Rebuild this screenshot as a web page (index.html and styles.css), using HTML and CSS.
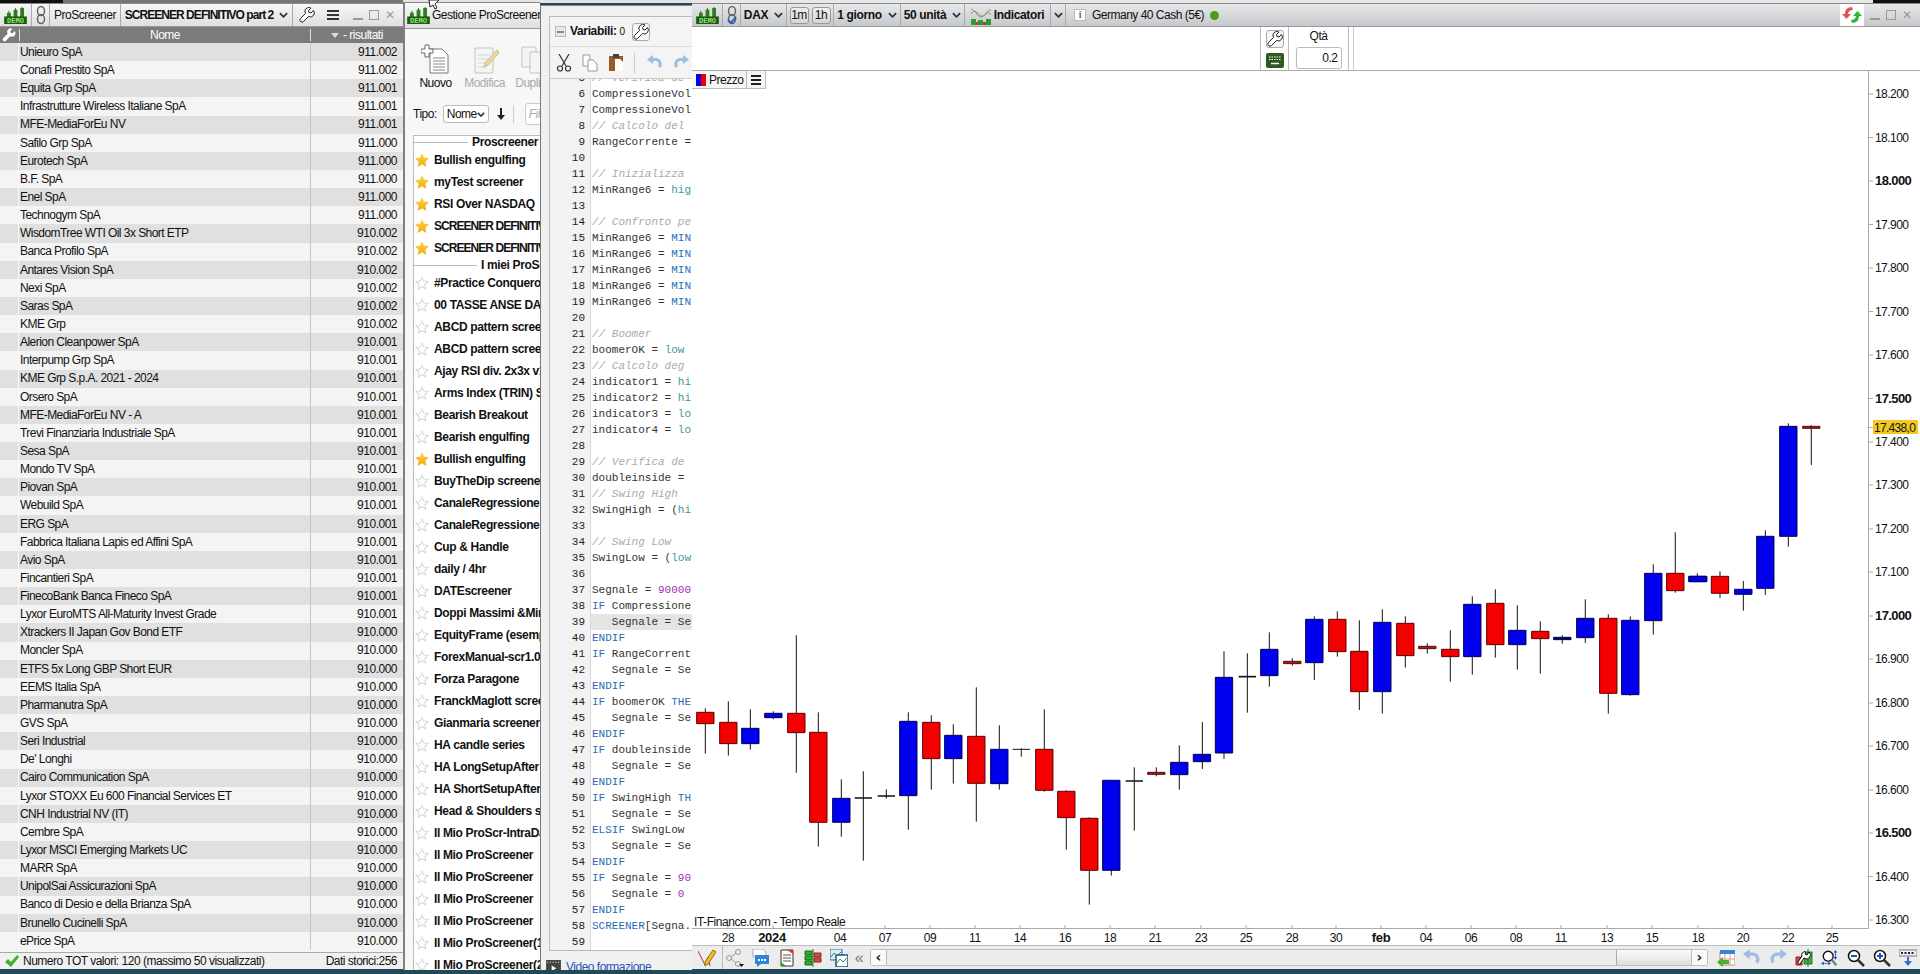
FILE: index.html
```html
<!DOCTYPE html>
<html lang="it">
<head>
<meta charset="utf-8">
<title>ProScreener</title>
<link rel="stylesheet" href="styles.css">
</head>
<body>
<svg class="defs" width="0" height="0" aria-hidden="true">
  <defs>
    <symbol id="demo" viewBox="0 0 24 18">
      <path fill="#2f7d1c" d="M3 6h4v5H3zM10 3h4v8h-4zM17 1h4v10h-4z"/>
      <path stroke="#2f7d1c" d="M5 4v8M12 1v11M19 0v12"/>
      <rect y="10" width="24" height="8" fill="#1c5a14"/>
      <text x="12" y="17" class="demo-txt" text-anchor="middle">DEMO</text>
    </symbol>
    <symbol id="wrench" viewBox="0 0 16 16">
      <path fill="#fff" stroke="#222" d="M14.5 3.5 12 6 10 5.500 9.500 3.500 12 1A4 4 0 0 0 6.500 6.500L1.500 11.500A2 2 0 0 0 4.500 14.500L9.500 9.500A4 4 0 0 0 14.500 3.500z"/>
    </symbol>
    <symbol id="chev" viewBox="0 0 10 6">
      <path fill="none" stroke="#333" stroke-width="2" d="M1 1l4 4 4-4"/>
    </symbol>
    <symbol id="undo" viewBox="0 0 16 16">
      <path fill="none" stroke="#9dbce6" stroke-width="3" d="M5 4.500h4a4.500 4.500 0 0 1 3 7.500"/>
      <path fill="#9dbce6" d="M6 0v9L0 4.500z"/>
    </symbol>
    <symbol id="redo" viewBox="0 0 16 16">
      <path fill="none" stroke="#9dbce6" stroke-width="3" d="M11 4.500H7a4.500 4.500 0 0 0-3 7.500"/>
      <path fill="#9dbce6" d="M10 0v9l6-4.500z"/>
    </symbol>
    <symbol id="link" viewBox="0 0 12 20">
      <g fill="none" stroke="#666" stroke-width="1.500">
        <ellipse cx="6" cy="6" rx="3.500" ry="4.500"/>
        <ellipse cx="6" cy="14" rx="3.500" ry="4.500"/>
      </g>
    </symbol>
  </defs>
</svg>

<div class="strip strip-a"></div>
<div class="strip strip-b"></div>
<div class="strip strip-c"></div>

<!-- Lista risultati -->
<section class="win win-results">
  <header class="tbar tbar-light">
    <div class="cell c-logo"><svg class="logo"><use href="#demo"/></svg></div>
    <div class="cell c-link"><svg class="link-ic"><use href="#link"/></svg></div>
    <div class="cell c-name">ProScreener</div>
    <div class="cell c-screener"><b class="caps">SCREENER DEFINITIVO part 2</b><svg class="chev"><use href="#chev"/></svg></div>
    <div class="tools">
      <svg class="ic16"><use href="#wrench"/></svg>
      <div class="burger"></div>
      <div class="winbtns"><i class="wmin"></i><i class="wmax"></i><i class="wclose">✕</i></div>
    </div>
  </header>
  <div class="res-head">
    <svg class="res-wrench" viewBox="0 0 16 16"><path fill="#fff" d="M14.500 3.500 12 6 10 5.500 9.500 3.500 12 1A4 4 0 0 0 6.500 6.500L1.500 11.500A2 2 0 0 0 4.500 14.500L9.500 9.500A4 4 0 0 0 14.500 3.500z"/></svg>
    <span class="res-nome">Nome</span>
    <span class="res-val"><i class="sort"></i> - risultati</span>
  </div>
  <div class="res-rows">
    <div class="row"><span class="nm">Unieuro SpA</span><span class="val">911.002</span></div>
    <div class="row"><span class="nm">Conafi Prestito SpA</span><span class="val">911.002</span></div>
    <div class="row"><span class="nm">Equita Grp SpA</span><span class="val">911.001</span></div>
    <div class="row"><span class="nm">Infrastrutture Wireless Italiane SpA</span><span class="val">911.001</span></div>
    <div class="row"><span class="nm">MFE-MediaForEu NV</span><span class="val">911.001</span></div>
    <div class="row"><span class="nm">Safilo Grp SpA</span><span class="val">911.000</span></div>
    <div class="row"><span class="nm">Eurotech SpA</span><span class="val">911.000</span></div>
    <div class="row"><span class="nm">B.F. SpA</span><span class="val">911.000</span></div>
    <div class="row"><span class="nm">Enel SpA</span><span class="val">911.000</span></div>
    <div class="row"><span class="nm">Technogym SpA</span><span class="val">911.000</span></div>
    <div class="row"><span class="nm">WisdomTree WTI Oil 3x Short ETP</span><span class="val">910.002</span></div>
    <div class="row"><span class="nm">Banca Profilo SpA</span><span class="val">910.002</span></div>
    <div class="row"><span class="nm">Antares Vision SpA</span><span class="val">910.002</span></div>
    <div class="row"><span class="nm">Nexi SpA</span><span class="val">910.002</span></div>
    <div class="row"><span class="nm">Saras SpA</span><span class="val">910.002</span></div>
    <div class="row"><span class="nm">KME Grp</span><span class="val">910.002</span></div>
    <div class="row"><span class="nm">Alerion Cleanpower SpA</span><span class="val">910.001</span></div>
    <div class="row"><span class="nm">Interpump Grp SpA</span><span class="val">910.001</span></div>
    <div class="row"><span class="nm">KME Grp S.p.A. 2021 - 2024</span><span class="val">910.001</span></div>
    <div class="row"><span class="nm">Orsero SpA</span><span class="val">910.001</span></div>
    <div class="row"><span class="nm">MFE-MediaForEu NV - A</span><span class="val">910.001</span></div>
    <div class="row"><span class="nm">Trevi Finanziaria Industriale SpA</span><span class="val">910.001</span></div>
    <div class="row"><span class="nm">Sesa SpA</span><span class="val">910.001</span></div>
    <div class="row"><span class="nm">Mondo TV SpA</span><span class="val">910.001</span></div>
    <div class="row"><span class="nm">Piovan SpA</span><span class="val">910.001</span></div>
    <div class="row"><span class="nm">Webuild SpA</span><span class="val">910.001</span></div>
    <div class="row"><span class="nm">ERG SpA</span><span class="val">910.001</span></div>
    <div class="row"><span class="nm">Fabbrica Italiana Lapis ed Affini SpA</span><span class="val">910.001</span></div>
    <div class="row"><span class="nm">Avio SpA</span><span class="val">910.001</span></div>
    <div class="row"><span class="nm">Fincantieri SpA</span><span class="val">910.001</span></div>
    <div class="row"><span class="nm">FinecoBank Banca Fineco SpA</span><span class="val">910.001</span></div>
    <div class="row"><span class="nm">Lyxor EuroMTS All-Maturity Invest Grade</span><span class="val">910.001</span></div>
    <div class="row"><span class="nm">Xtrackers II Japan Gov Bond ETF</span><span class="val">910.000</span></div>
    <div class="row"><span class="nm">Moncler SpA</span><span class="val">910.000</span></div>
    <div class="row"><span class="nm">ETFS 5x Long GBP Short EUR</span><span class="val">910.000</span></div>
    <div class="row"><span class="nm">EEMS Italia SpA</span><span class="val">910.000</span></div>
    <div class="row"><span class="nm">Pharmanutra SpA</span><span class="val">910.000</span></div>
    <div class="row"><span class="nm">GVS SpA</span><span class="val">910.000</span></div>
    <div class="row"><span class="nm">Seri Industrial</span><span class="val">910.000</span></div>
    <div class="row"><span class="nm">De' Longhi</span><span class="val">910.000</span></div>
    <div class="row"><span class="nm">Cairo Communication SpA</span><span class="val">910.000</span></div>
    <div class="row"><span class="nm">Lyxor STOXX Eu 600 Financial Services ET</span><span class="val">910.000</span></div>
    <div class="row"><span class="nm">CNH Industrial NV (IT)</span><span class="val">910.000</span></div>
    <div class="row"><span class="nm">Cembre SpA</span><span class="val">910.000</span></div>
    <div class="row"><span class="nm">Lyxor MSCI Emerging Markets UC</span><span class="val">910.000</span></div>
    <div class="row"><span class="nm">MARR SpA</span><span class="val">910.000</span></div>
    <div class="row"><span class="nm">UnipolSai Assicurazioni SpA</span><span class="val">910.000</span></div>
    <div class="row"><span class="nm">Banco di Desio e della Brianza SpA</span><span class="val">910.000</span></div>
    <div class="row"><span class="nm">Brunello Cucinelli SpA</span><span class="val">910.000</span></div>
    <div class="row"><span class="nm">ePrice SpA</span><span class="val">910.000</span></div>
  </div>
  <footer class="res-status">
    <svg class="check" viewBox="0 0 14 12"><path fill="#3fae2a" d="M0 7l3-3 3 3 6-7 2 2-8 10z"/></svg>
    <span class="res-count">Numero TOT valori: 120 (massimo 50 visualizzati)</span>
    <span class="res-hist">Dati storici:256</span>
  </footer>
</section>

<!-- Gestione ProScreener -->
<section class="win win-manager">
  <header class="tbar tbar-light">
    <svg class="logo mgr-logo"><use href="#demo"/></svg>
    <span class="mgr-title">Gestione ProScreener</span>
  </header>
  <div class="mgr-tools">
    <div class="tool">
      <svg class="tool-ic" viewBox="0 0 30 30">
        <path fill="#fff" stroke="#777" d="M9 5h12l6 6v18H9z"/>
        <path stroke="#888" d="M12 14h12M12 17h12M12 20h12M12 23h12M12 26h12"/>
        <path fill="#fff" stroke="#666" d="M4 1h4v4h4v4H8v4H4V9H0V5h4z"/>
      </svg>
      <span>Nuovo</span>
    </div>
    <div class="tool tool-off">
      <svg class="tool-ic" viewBox="0 0 30 30">
        <path fill="#f4f4f4" stroke="#c4c4c4" d="M5 4h18v25H5z"/>
        <path stroke="#d4d4d4" d="M8 11h12M8 15h12M8 19h10M8 23h8"/>
        <path fill="#ecd9a0" stroke="#cdb980" d="M27 6l2 3-11 12-4 2 1-4z"/>
      </svg>
      <span>Modifica</span>
    </div>
    <div class="tool tool-off">
      <svg class="tool-ic" viewBox="0 0 30 30">
        <path fill="#f4f4f4" stroke="#c4c4c4" d="M3 3h14v20H3z"/>
        <path fill="#f4f4f4" stroke="#c4c4c4" d="M11 8h14v21H11z"/>
      </svg>
      <span>Duplica</span>
    </div>
  </div>
  <div class="mgr-filter">
    <span>Tipo:</span>
    <span class="fake-select">Nome<svg class="chev chev-sm"><use href="#chev"/></svg></span>
    <svg class="arrow-down" viewBox="0 0 10 12"><path fill="#222" d="M4 0h2v7h3l-4 5-4-5h3z"/></svg>
    <i class="vsep"></i>
    <span class="fake-input">Filtro</span>
  </div>
  <div class="mgr-list">
    <div class="lhead lhead-a"><b>Proscreener</b></div>
    <div class="li"><i class="star on"></i><b>Bullish engulfing</b></div>
    <div class="li"><i class="star on"></i><b>myTest screener</b></div>
    <div class="li"><i class="star on"></i><b>RSI Over NASDAQ</b></div>
    <div class="li"><i class="star on"></i><b class="caps">SCREENER DEFINITIVO</b></div>
    <div class="li"><i class="star on"></i><b class="caps">SCREENER DEFINITIVO</b></div>
    <div class="lhead lhead-b"><b>I miei ProScreener</b></div>
    <div class="li"><i class="star"></i><b>#Practice Conquerors</b></div>
    <div class="li"><i class="star"></i><b>00 TASSE ANSE DAY</b></div>
    <div class="li"><i class="star"></i><b>ABCD pattern screener</b></div>
    <div class="li"><i class="star"></i><b>ABCD pattern screener</b></div>
    <div class="li"><i class="star"></i><b>Ajay RSI div. 2x3x v1</b></div>
    <div class="li"><i class="star"></i><b>Arms Index (TRIN) Screener</b></div>
    <div class="li"><i class="star"></i><b>Bearish Breakout</b></div>
    <div class="li"><i class="star"></i><b>Bearish engulfing</b></div>
    <div class="li"><i class="star on"></i><b>Bullish engulfing</b></div>
    <div class="li"><i class="star"></i><b>BuyTheDip screener</b></div>
    <div class="li"><i class="star"></i><b>CanaleRegressione</b></div>
    <div class="li"><i class="star"></i><b>CanaleRegressione</b></div>
    <div class="li"><i class="star"></i><b>Cup &amp; Handle</b></div>
    <div class="li"><i class="star"></i><b>daily / 4hr</b></div>
    <div class="li"><i class="star"></i><b>DATEscreener</b></div>
    <div class="li"><i class="star"></i><b>Doppi Massimi &amp;Minimi</b></div>
    <div class="li"><i class="star"></i><b>EquityFrame (esempio)</b></div>
    <div class="li"><i class="star"></i><b>ForexManual-scr1.0</b></div>
    <div class="li"><i class="star"></i><b>Forza Paragone</b></div>
    <div class="li"><i class="star"></i><b>FranckMaglott screener</b></div>
    <div class="li"><i class="star"></i><b>Gianmaria screener</b></div>
    <div class="li"><i class="star"></i><b>HA candle series</b></div>
    <div class="li"><i class="star"></i><b>HA LongSetupAfter</b></div>
    <div class="li"><i class="star"></i><b>HA ShortSetupAfter</b></div>
    <div class="li"><i class="star"></i><b>Head &amp; Shoulders s</b></div>
    <div class="li"><i class="star"></i><b>Il Mio ProScr-IntraDay</b></div>
    <div class="li"><i class="star"></i><b>Il Mio ProScreener</b></div>
    <div class="li"><i class="star"></i><b>Il Mio ProScreener</b></div>
    <div class="li"><i class="star"></i><b>Il Mio ProScreener</b></div>
    <div class="li"><i class="star"></i><b>Il Mio ProScreener</b></div>
    <div class="li"><i class="star"></i><b>Il Mio ProScreener(1)</b></div>
    <div class="li"><i class="star"></i><b>Il Mio ProScreener(2)</b></div>
  </div>
</section>

<!-- Editor -->
<section class="win win-editor">
  <div class="ed-panel">
    <div class="ed-vars">
      <i class="minus"></i>
      <b>Variabili:</b><sup>0</sup>
      <span class="wr-btn"><svg class="ic16"><use href="#wrench"/></svg></span>
    </div>
    <div class="ed-tools">
      <svg class="ed-ic" viewBox="0 0 16 18"><path fill="none" stroke="#333" stroke-width="1.200" d="M3 0l7 12M13 0L6 12"/><circle cx="4" cy="14.500" r="2.500" fill="none" stroke="#333" stroke-width="1.200"/><circle cx="12" cy="14.500" r="2.500" fill="none" stroke="#333" stroke-width="1.200"/></svg>
      <svg class="ed-ic" viewBox="0 0 16 18"><path fill="#fff" stroke="#999" d="M1 1h7v11H1z"/><path fill="#fff" stroke="#999" d="M6 6h5l4 4v7H6z"/></svg>
      <svg class="ed-ic" viewBox="0 0 16 18"><path fill="#9a5a22" d="M1 2h14v15H1z"/><path fill="#fff" d="M7 5h5l3 3v9H7z"/><path fill="#444" d="M5 0h6v4H5z"/></svg>
      <i class="vsep ed-sep"></i>
      <svg class="ed-ic"><use href="#undo"/></svg>
      <svg class="ed-ic"><use href="#redo"/></svg>
    </div>
    <div class="code">
      <div class="code-lines">
        <div class="ln"><span class="no">5</span><span class="src cm">// Verifica de</span></div>
        <div class="ln"><span class="no">6</span><span class="src">CompressioneVol</span></div>
        <div class="ln"><span class="no">7</span><span class="src">CompressioneVol</span></div>
        <div class="ln"><span class="no">8</span><span class="src cm">// Calcolo del</span></div>
        <div class="ln"><span class="no">9</span><span class="src">RangeCorrente =</span></div>
        <div class="ln"><span class="no">10</span><span class="src"></span></div>
        <div class="ln"><span class="no">11</span><span class="src cm">// Inizializza</span></div>
        <div class="ln"><span class="no">12</span><span class="src">MinRange6 = <em class="fn">hig</em></span></div>
        <div class="ln"><span class="no">13</span><span class="src"></span></div>
        <div class="ln"><span class="no">14</span><span class="src cm">// Confronto pe</span></div>
        <div class="ln"><span class="no">15</span><span class="src">MinRange6 = <em class="kw">MIN</em></span></div>
        <div class="ln"><span class="no">16</span><span class="src">MinRange6 = <em class="kw">MIN</em></span></div>
        <div class="ln"><span class="no">17</span><span class="src">MinRange6 = <em class="kw">MIN</em></span></div>
        <div class="ln"><span class="no">18</span><span class="src">MinRange6 = <em class="kw">MIN</em></span></div>
        <div class="ln"><span class="no">19</span><span class="src">MinRange6 = <em class="kw">MIN</em></span></div>
        <div class="ln"><span class="no">20</span><span class="src"></span></div>
        <div class="ln"><span class="no">21</span><span class="src cm">// Boomer</span></div>
        <div class="ln"><span class="no">22</span><span class="src">boomerOK = <em class="fn">low</em></span></div>
        <div class="ln"><span class="no">23</span><span class="src cm">// Calcolo deg</span></div>
        <div class="ln"><span class="no">24</span><span class="src">indicator1 = <em class="fn">hi</em></span></div>
        <div class="ln"><span class="no">25</span><span class="src">indicator2 = <em class="fn">hi</em></span></div>
        <div class="ln"><span class="no">26</span><span class="src">indicator3 = <em class="fn">lo</em></span></div>
        <div class="ln"><span class="no">27</span><span class="src">indicator4 = <em class="fn">lo</em></span></div>
        <div class="ln"><span class="no">28</span><span class="src"></span></div>
        <div class="ln"><span class="no">29</span><span class="src cm">// Verifica de</span></div>
        <div class="ln"><span class="no">30</span><span class="src">doubleinside =</span></div>
        <div class="ln"><span class="no">31</span><span class="src cm">// Swing High</span></div>
        <div class="ln"><span class="no">32</span><span class="src">SwingHigh = (<em class="fn">hi</em></span></div>
        <div class="ln"><span class="no">33</span><span class="src"></span></div>
        <div class="ln"><span class="no">34</span><span class="src cm">// Swing Low</span></div>
        <div class="ln"><span class="no">35</span><span class="src">SwingLow = (<em class="fn">low</em></span></div>
        <div class="ln"><span class="no">36</span><span class="src"></span></div>
        <div class="ln"><span class="no">37</span><span class="src">Segnale = <em class="num">90000</em></span></div>
        <div class="ln"><span class="no">38</span><span class="src"><em class="kw">IF</em> Compressione</span></div>
        <div class="ln ln-cur"><span class="no">39</span><span class="src">   Segnale = Se</span></div>
        <div class="ln"><span class="no">40</span><span class="src kw">ENDIF</span></div>
        <div class="ln"><span class="no">41</span><span class="src"><em class="kw">IF</em> RangeCorrent</span></div>
        <div class="ln"><span class="no">42</span><span class="src">   Segnale = Se</span></div>
        <div class="ln"><span class="no">43</span><span class="src kw">ENDIF</span></div>
        <div class="ln"><span class="no">44</span><span class="src"><em class="kw">IF</em> boomerOK <em class="kw">THE</em></span></div>
        <div class="ln"><span class="no">45</span><span class="src">   Segnale = Se</span></div>
        <div class="ln"><span class="no">46</span><span class="src kw">ENDIF</span></div>
        <div class="ln"><span class="no">47</span><span class="src"><em class="kw">IF</em> doubleinside</span></div>
        <div class="ln"><span class="no">48</span><span class="src">   Segnale = Se</span></div>
        <div class="ln"><span class="no">49</span><span class="src kw">ENDIF</span></div>
        <div class="ln"><span class="no">50</span><span class="src"><em class="kw">IF</em> SwingHigh <em class="kw">TH</em></span></div>
        <div class="ln"><span class="no">51</span><span class="src">   Segnale = Se</span></div>
        <div class="ln"><span class="no">52</span><span class="src"><em class="kw">ELSIF</em> SwingLow</span></div>
        <div class="ln"><span class="no">53</span><span class="src">   Segnale = Se</span></div>
        <div class="ln"><span class="no">54</span><span class="src kw">ENDIF</span></div>
        <div class="ln"><span class="no">55</span><span class="src"><em class="kw">IF</em> Segnale = <em class="num">90</em></span></div>
        <div class="ln"><span class="no">56</span><span class="src">   Segnale = <em class="num">0</em></span></div>
        <div class="ln"><span class="no">57</span><span class="src kw">ENDIF</span></div>
        <div class="ln"><span class="no">58</span><span class="src"><em class="kw">SCREENER</em>[Segna.</span></div>
        <div class="ln"><span class="no">59</span><span class="src"></span></div>
      </div>
    </div>
  </div>
  <div class="ed-video">
    <svg class="video-ic" viewBox="0 0 16 14"><path fill="#444" d="M0 0h16v14H0z"/><path fill="#fff" d="M1 2h1v1H1zM4 2h1v1H4zM7 2h1v1H7zM10 2h1v1h-1zM13 2h1v1h-1zM6 6l5 3-5 3z"/></svg>
    <span>Video formazione</span>
  </div>
</section>

<!-- Grafico -->
<section class="win win-chart">
  <header class="tbar tbar-grey">
    <div class="cell k-logo"><svg class="logo"><use href="#demo"/></svg></div>
    <div class="cell k-link">
      <svg class="link-ic"><use href="#link"/></svg>
      <svg class="link-check" viewBox="0 0 10 8"><path fill="none" stroke="#2a62c0" stroke-width="2" d="M1 4l3 3 5-6"/></svg>
    </div>
    <div class="cell k-dax"><b>DAX</b><svg class="chev"><use href="#chev"/></svg></div>
    <div class="cell k-tf"><span class="tf">1m</span><span class="tf">1h</span></div>
    <div class="cell k-day"><b>1 giorno</b><svg class="chev"><use href="#chev"/></svg></div>
    <div class="cell k-units"><b>50 unità</b><svg class="chev"><use href="#chev"/></svg></div>
    <div class="cell k-ind">
      <svg class="ind-ic" viewBox="0 0 20 20">
        <path fill="none" stroke="#c66" d="M0 9c4-8 8 4 12 2s4-6 8-6"/>
        <path fill="none" stroke="#6a6" d="M0 4c4 0 6 8 10 8s6-8 10-2"/>
        <path fill="#2f9a2f" d="M0 14h5v6H0zM7 15h5v5H7zM15 14h5v6h-5z"/>
        <path fill="#c33" d="M5 17h2v3H5zM12 17h3v3h-3z"/>
      </svg>
      <b>Indicatori</b>
    </div>
    <div class="cell k-chev"><svg class="chev"><use href="#chev"/></svg></div>
    <div class="info">
      <span class="info-i">i</span>
      <span class="info-name">Germany 40 Cash (5€)</span>
      <i class="dot"></i>
    </div>
    <div class="refresh">
      <svg class="refresh-ic" viewBox="0 0 20 20">
        <path fill="#e25555" d="M10 2C5 2 3 5 3 9H0l4.500 5L9 9H6c0-2 2-4 5-4z"/>
        <path fill="#2eb82e" d="M10 18c5 0 7-3 7-7h3l-4.500-5L11 11h3c0 2-2 4-5 4z"/>
      </svg>
    </div>
    <div class="winbtns winbtns-chart"><i class="wmin"></i><i class="wmax"></i><i class="wclose">✕</i></div>
  </header>
  <div class="orderbar">
    <div class="order-tools">
      <span class="wr-btn"><svg class="ic16"><use href="#wrench"/></svg></span>
      <svg class="kbd" viewBox="0 0 18 15"><rect width="18" height="15" rx="2" fill="#2f5a1f"/><path stroke="#fff" stroke-dasharray="1.500 1" d="M3 4h12M3 6.500h12"/><path stroke="#fff" stroke-width="1.500" d="M5 10.500h8"/></svg>
    </div>
    <div class="order-qty">
      <span>Qtà</span>
      <span class="qty-input">0.2</span>
    </div>
    <div class="order-end"></div>
  </div>
  <div class="plot">
    <svg class="chart" viewBox="692 71 1228 874" width="1228" height="874">
      <path class="axis" d="M1868.500 71V928.500M692 928.500H1868.500"/>
      <path class="axis" d="M1868 94h5M1868 137.500h5M1868 181h5M1868 224.500h5M1868 268h5M1868 311.500h5M1868 355h5M1868 398.500h5M1868 427.500h5M1868 442h5M1868 485h5M1868 529h5M1868 572h5M1868 616h5M1868 659h5M1868 703h5M1868 746h5M1868 790h5M1868 833h5M1868 876.500h5M1868 920h5"/>
      <path class="axis" d="M728 928v-3M773 928v-3M796 928v-3M840 928v-3M885 928v-3M930 928v-3M975 928v-3M1020 928v-3M1065 928v-3M1110 928v-3M1155 928v-3M1201 928v-3M1246 928v-3M1292 928v-3M1336 928v-3M1381 928v-3M1426 928v-3M1471 928v-3M1516 928v-3M1561 928v-3M1607 928v-3M1652 928v-3M1698 928v-3M1743 928v-3M1788 928v-3M1832 928v-3"/>

      <g transform="translate(700 580) scale(.3333)">
        <path class="wick" d="M16 385V521M85 364V527M151 388V509M220 394V417M289 166V578M355 397V800M424 598V770M490 574V842M559 628V656M625 397V749M694 406V629M760 433V611M829 322V725M898 436V629M964 505V530M1033 388V635M1099 631V809M1168 712V974M1234 601V887M1303 562V752M1369 562V589M1438 496V629"/>
        <path class="red" d="M-10 397h52V431h-52zM59 427h52V491h-52zM263 400h52V458h-52zM329 457h52V727h-52zM668 427h52V536h-52zM803 469h52V610h-52zM1007 508h52V631h-52zM1073 634h52V713h-52zM1142 715h52V871h-52z"/>
        <path class="blue" d="M125 445h52V491h-52zM194 400h52V413h-52zM398 655h52V727h-52zM599 424h52V647h-52zM734 466h52V536h-52zM872 508h52V611h-52zM1208 601h52V871h-52zM1412 547h52V584h-52zM1480 523h52V545h-52z"/>
        <path class="doji" d="M464 654h52M533 648h52M1277 603h52"/>
        <path class="doji-thin" d="M938 508h52"/>
        <path class="dred" d="M1343 577h52V583h-52z"/>
      </g>
      <g transform="translate(1200 500) scale(.3333)">
        <path class="wick" d="M7 666V807M72 454V777M142 460V638M208 397V560M277 475V497M343 349V540M412 334V470M478 361V630M547 328V641M616 349V503M682 430V461M751 391V545M817 289V524M886 268V473M952 316V509M1021 364V521M1087 406V431M1156 298V429M1225 343V641M1291 349V587M1360 193V404M1426 97V278"/>
        <path class="red" d="M386 358h52V455h-52zM452 454h52V575h-52zM590 370h52V467h-52zM725 448h52V470h-52zM860 310h52V434h-52zM995 394h52V416h-52zM1199 355h52V580h-52zM1400 220h52V272h-52z"/>
        <path class="blue" d="M46 532h52V759h-52zM182 448h52V527h-52zM317 358h52V488h-52zM521 367h52V575h-52zM791 313h52V470h-52zM926 391h52V434h-52zM1130 355h52V413h-52zM1265 361h52V584h-52zM1334 220h52V362h-52zM1469 229h52V245h-52z"/>
        <path class="navy" d="M1061 412h52V419h-52z"/>
        <path class="doji" d="M116 530h52"/>
        <path class="dred" d="M251 484h52V491h-52zM656 439h52V446h-52z"/>
      </g>
      <g transform="translate(1600 380) scale(.3333)">
        <path class="wick" d="M292 580V605M360 574V654M430 603V692M496 451V645M565 130V500M634 136V255"/>
        <path class="red" d="M334 589h52V640h-52z"/>
        <path class="blue" d="M266 589h52V605h-52zM404 628h52V643h-52zM470 469h52V625h-52zM539 139h52V469h-52z"/>
        <path class="dred" d="M608 139h52V145h-52z"/>
      </g>

      <g class="yl">
        <text x="1875" y="98">18.200</text>
        <text x="1875" y="141.500">18.100</text>
        <text x="1875" y="185" class="bold">18.000</text>
        <text x="1875" y="228.500">17.900</text>
        <text x="1875" y="272">17.800</text>
        <text x="1875" y="315.500">17.700</text>
        <text x="1875" y="359">17.600</text>
        <text x="1875" y="402.500" class="bold">17.500</text>
        <text x="1875" y="446">17.400</text>
        <text x="1875" y="489">17.300</text>
        <text x="1875" y="533">17.200</text>
        <text x="1875" y="576">17.100</text>
        <text x="1875" y="620" class="bold">17.000</text>
        <text x="1875" y="663">16.900</text>
        <text x="1875" y="707">16.800</text>
        <text x="1875" y="750">16.700</text>
        <text x="1875" y="794">16.600</text>
        <text x="1875" y="837" class="bold">16.500</text>
        <text x="1875" y="880.500">16.400</text>
        <text x="1875" y="924">16.300</text>
      </g>
      <rect class="last-bg" x="1873" y="420" width="45" height="14"/>
      <text class="last-tx" x="1874" y="431.500">17.438,0</text>

      <g class="xl">
        <text x="728" y="942">28</text>
        <text x="772" y="942" class="bold">2024</text>
        <text x="840" y="942">04</text>
        <text x="885" y="942">07</text>
        <text x="930" y="942">09</text>
        <text x="975" y="942">11</text>
        <text x="1020" y="942">14</text>
        <text x="1065" y="942">16</text>
        <text x="1110" y="942">18</text>
        <text x="1155" y="942">21</text>
        <text x="1201" y="942">23</text>
        <text x="1246" y="942">25</text>
        <text x="1292" y="942">28</text>
        <text x="1336" y="942">30</text>
        <text x="1381" y="942" class="bold">feb</text>
        <text x="1426" y="942">04</text>
        <text x="1471" y="942">06</text>
        <text x="1516" y="942">08</text>
        <text x="1561" y="942">11</text>
        <text x="1607" y="942">13</text>
        <text x="1652" y="942">15</text>
        <text x="1698" y="942">18</text>
        <text x="1743" y="942">20</text>
        <text x="1788" y="942">22</text>
        <text x="1832" y="942">25</text>
      </g>
      <text class="source" x="694" y="926">IT-Finance.com - Tempo Reale</text>
    </svg>
    <div class="legend">
      <i class="swatch"></i>
      <span class="legend-name">Prezzo</span>
      <span class="legend-list"><i></i><i></i><i></i></span>
    </div>
  </div>
  <footer class="cbar">
    <div class="cbar-first">
      <svg class="bi" viewBox="0 0 18 18"><path fill="none" stroke="#a33" d="M0 2l7 14 3-8 2 9"/><path fill="#f0c419" stroke="#8a6d10" d="M15 1l3 2-8 12-3 2 0-4z"/></svg>
    </div>
    <div class="cbar-left">
      <svg class="bi" viewBox="0 0 18 18"><g fill="none" stroke="#999"><circle cx="3" cy="9" r="2.500"/><circle cx="12" cy="3" r="2.500"/><circle cx="12" cy="15" r="2.500"/><path d="M5 8l5-4M5 10l5 4"/></g><path fill="#111" d="M13 15h5l-2.500 3z"/></svg>
      <svg class="bi" viewBox="0 0 18 18"><path fill="#fff" stroke="#9ab" d="M1 0h10l3 3v5H1z"/><path fill="#2f86d6" d="M3 6h14v9H9l-4 3v-3H3z"/><path fill="#fff" d="M6 10h2v2H6zM9 10h2v2H9zM12 10h2v2h-2z"/></svg>
      <svg class="bi" viewBox="0 0 18 18"><path fill="#fff" stroke="#333" d="M3 1h12v16H3z"/><path stroke="#555" d="M5 6h8M5 9h8M5 12h8"/><path fill="#d33" d="M9 1h6v4z"/><path fill="#2a2" d="M3 17v-4l5 4z"/></svg>
      <svg class="bi" viewBox="0 0 18 18"><path fill="#2fae2f" stroke="#176e17" d="M1 2h7v4H1zM1 7h7v4H1zM1 12h7v4H1z"/><path fill="#d84a4a" stroke="#8e2323" d="M10 4h7v4h-7zM10 9h7v4h-7z"/><path stroke="#176e17" d="M9 0v18"/></svg>
      <svg class="bi" viewBox="0 0 18 18"><rect x="0" y="0" width="12" height="11" rx="1" fill="#dfeaf7" stroke="#2a62a8"/><path fill="none" stroke="#2a9a2a" d="M1 8l3-4 3 3 4-4"/><rect x="6" y="6" width="12" height="12" rx="1" fill="#fff" stroke="#1c4f96" stroke-width="1.500"/><path fill="none" stroke="#2a9a2a" d="M7 14l3-4 3 3 4-4"/></svg>
    </div>
    <span class="rew">«</span>
    <div class="scroll">
      <span class="sbtn">‹</span>
      <span class="strack"></span>
      <span class="sthumb"></span>
      <span class="sbtn">›</span>
    </div>
    <div class="cbar-right">
      <svg class="bi" viewBox="0 0 18 18"><path fill="#fff" stroke="#c88" d="M3 3h15v13H3z"/><path fill="#2f86d6" d="M3 1h15v4H3z"/><path stroke="#d99" d="M8 5v11M13 5v11M3 10h15"/><path fill="#4cae2c" d="M0 13l6-5v3h6v4H6v3z"/></svg>
      <svg class="bi"><use href="#undo"/></svg>
      <svg class="bi"><use href="#redo"/></svg>
      <svg class="bi" viewBox="0 0 18 18"><path fill="#3fae3f" stroke="#1c7a1c" d="M9 3h8v12H9z"/><path stroke="#1c7a1c" d="M13 0v18"/><path fill="#d44" stroke="#922" d="M1 8h6v8H1z"/><path fill="#fff" stroke="#111" d="M14 3l-2 3-2-1 1-2A3 3 0 0 0 7 7L3 13a1.500 1.500 0 0 0 2 2l4-6a3 3 0 0 0 5-6z"/></svg>
      <svg class="bi" viewBox="0 0 20 18"><circle cx="8" cy="7" r="5.500" fill="#fff" stroke="#111" stroke-width="1.500"/><path stroke="#777" stroke-width="2.500" d="M12 11l5 6"/><path fill="#1c4fd0" d="M16 0l2 3h-1.500v5H18l-2 3-2-3h1.500V3H14zM0 15l3-2v1.500h5V13l3 2-3 2v-1.500H3V17z"/></svg>
      <svg class="bi" viewBox="0 0 18 18"><circle cx="7" cy="7" r="5.500" fill="#fff" stroke="#111" stroke-width="1.500"/><path stroke="#333" stroke-width="2.500" d="M11 11l6 6"/><path stroke="#1c4fd0" stroke-width="2" d="M4 7h6"/></svg>
      <svg class="bi" viewBox="0 0 18 18"><circle cx="7" cy="7" r="5.500" fill="#fff" stroke="#111" stroke-width="1.500"/><path stroke="#333" stroke-width="2.500" d="M11 11l6 6"/><path stroke="#1c4fd0" stroke-width="2" d="M4 7h6M7 4v6"/></svg>
      <svg class="bi" viewBox="0 0 18 18"><rect x="0" y="1" width="18" height="6" fill="#f4f4f4" stroke="#777"/><path stroke="#222" stroke-width="2" stroke-dasharray="2 1.500" d="M2 4h14"/><path fill="#2f6fd0" d="M8 8h2v4h3l-4 5-4-5h3z"/></svg>
    </div>
  </footer>
</section>

<svg class="cursor" viewBox="0 0 12 10"><path fill="#fff" stroke="#222" d="M1 0h10L7 4l2 4-2 1-2-4-3 2z"/></svg>
</body>
</html>
```

FILE: styles.css
```css
* { box-sizing: border-box; }
html, body { margin: 0; height: 100%; }
body {
  position: relative;
  width: 1920px;
  height: 974px;
  overflow: hidden;
  background: #1f4a5a;
  color: #111;
  font: 12px/1.2 "Liberation Sans", Arial, sans-serif;
  letter-spacing: -.5px;
}
b { font-weight: 700; letter-spacing: -.35px; }
i, em { font-style: normal; }
.defs { position: absolute; }
.demo-txt { font: 700 7.5px "Liberation Mono", monospace; fill: #8fe36b; letter-spacing: 0; }

/* desktop fragments around the windows */
.strip { position: absolute; top: 0; height: 3px; }
.strip-a { left: 0; width: 403px; background: linear-gradient(90deg, #111 0 63px, #777 63px); }
.strip-b { left: 403px; width: 289px; background: #e4e4e4; }
.strip-c { left: 692px; width: 1228px; background: linear-gradient(90deg, #e8e8e8 0 1181px, #111 1181px); }

.win { position: absolute; overflow: hidden; display: flex; flex-direction: column; }
.win-results { left: 0; top: 3px; width: 403px; height: 966px; background: #f0f0f0; }
.win-manager { left: 403px; top: 2px; width: 137px; height: 968px; background: #f7f7f7; border-left: 2px solid #808080; }
.win-editor { left: 540px; top: 5px; width: 152px; height: 965px; background: #f0f0f0; border-left: 1px solid #777; border-top: 1px solid #888; padding: 10px 0 0 8px; }
.win-chart { left: 692px; top: 3px; width: 1228px; height: 966px; background: #fff; }

/* title bars */
.tbar { flex: 0 0 24px; display: flex; align-items: stretch; border-bottom: 1px solid #999; border-top: 1px solid #888; }
.tbar-light { background: linear-gradient(#f8f8f8, #dedede); }
.tbar-grey { background: linear-gradient(#e6e8ea, #c6c9cc); }
.win-manager .tbar { flex-basis: 25px; }
.cell { display: flex; align-items: center; justify-content: center; border-right: 1px solid #aaa; gap: 6px; }
.logo { width: 23px; height: 17px; flex: none; }
.link-ic { width: 12px; height: 20px; flex: none; }
.chev { width: 9px; height: 6px; flex: none; }
.chev-sm { width: 8px; height: 5px; }
.ic16 { width: 16px; height: 16px; flex: none; }
.c-logo { width: 32px; }
.c-link { width: 18px; }
.c-name { width: 71px; }
.c-screener { width: 172px; }
.caps { letter-spacing: -.95px; }
.tools { flex: 1; display: flex; align-items: center; padding-left: 6px; }
.burger { width: 12px; height: 10px; margin-left: 12px; border-top: 2px solid #333; border-bottom: 2px solid #333; background: linear-gradient(#333, #333) center / 100% 2px no-repeat; }
.winbtns { display: flex; align-items: center; gap: 6px; margin-left: 14px; color: #aaa; }
.winbtns-chart { margin-left: 6px; padding-right: 8px; }
.wmin { width: 10px; height: 10px; border-bottom: 2px solid #999; }
.wmax { width: 10px; height: 10px; border: 1px solid #999; }
.wclose { width: 10px; font: 700 12px/10px "DejaVu Sans", sans-serif; color: #999; letter-spacing: 0; }

/* results list */
.res-head { flex: 0 0 16px; display: flex; align-items: center; background: #7b7b7b; color: #fff; position: relative; }
.res-wrench { width: 14px; height: 14px; margin: 0 3px 0 2px; flex: none; }
.res-nome { width: 292px; text-align: center; border-left: 1px solid #ddd; border-right: 1px solid #ddd; line-height: 12px; }
.res-val { flex: 1; text-align: center; }
.sort { display: inline-block; border: 4px solid transparent; border-top: 5px solid #ddd; border-bottom: 0; vertical-align: 1px; margin-right: 1px; }
.res-rows { flex: 0 0 909px; display: grid; grid-auto-rows: 1fr; padding-bottom: 2px; background: #f4f4f4; }
.row { display: flex; align-items: center; background: #e0e0e0; }
.row:nth-child(even) { background: #f4f4f4; }
.row::before { content: ""; width: 18px; height: 100%; flex: none; border-right: 1px solid #f8f8f8; }
.nm { width: 292px; height: 100%; display: flex; align-items: center; padding-left: 1px; border-right: 1px solid #c6c6c6; white-space: nowrap; overflow: hidden; letter-spacing: -.55px; }
.val { flex: 1; text-align: right; padding-right: 6px; }
.res-status { flex: 1; display: flex; align-items: center; padding: 0 6px 0 5px; border-top: 1px solid #aaa; background: #f0f0f0; }
.check { width: 14px; height: 12px; margin-right: 4px; flex: none; }
.res-hist { margin-left: auto; }

/* manager */
.mgr-logo { margin: 4px 2px 0 2px; }
.mgr-title { line-height: 25px; white-space: nowrap; }
.mgr-tools { flex: 0 0 73px; display: flex; padding: 15px 0 0 6px; }
.tool { flex: 0 0 49px; display: flex; flex-direction: column; align-items: center; gap: 2px; }
.tool-ic { width: 30px; height: 30px; }
.tool-off { color: #aaa; }
.mgr-filter { flex: 0 0 24px; display: flex; align-items: center; padding-left: 8px; white-space: nowrap; }
.fake-select { margin-left: 6px; width: 48px; height: 18px; display: flex; align-items: center; justify-content: space-between; padding: 0 3px 0 3px; border: 1px solid #bbb; border-radius: 3px; background: #fff; }
.arrow-down { width: 10px; height: 12px; margin-left: 7px; flex: none; }
.vsep { width: 1px; height: 18px; background: #ccc; flex: none; }
.mgr-filter .vsep { margin-left: 7px; }
.fake-input { margin-left: 11px; width: 60px; height: 22px; line-height: 20px; padding-left: 3px; border: 1px solid #ccc; border-radius: 3px; background: #fff; color: #aaa; font-style: italic; flex: none; }
.mgr-list { flex: 1; margin: 9px 0 0 8px; width: 200px; background: #fff; border: 1px solid #bbb; border-bottom: 0; overflow: hidden; }
.lhead { display: flex; align-items: center; gap: 4px; white-space: nowrap; }
.lhead::before { content: ""; height: 1px; background: #bbb; flex: none; }
.lhead-a { height: 13px; }
.lhead-a::before { width: 54px; }
.lhead-b { height: 13px; }
.lhead-b::before { width: 63px; }
.li { height: 22px; display: flex; align-items: center; gap: 5px; padding-left: 1px; white-space: nowrap; }
.star { position: relative; width: 14px; height: 14px; flex: none; background: #cfd2d6; clip-path: polygon(50% 0, 64% 33%, 100% 38%, 74% 62%, 81% 100%, 50% 81%, 19% 100%, 26% 62%, 0 38%, 36% 33%); }
.star::after { content: ""; position: absolute; inset: 2px; background: #fff; clip-path: polygon(50% 0, 64% 33%, 100% 38%, 74% 62%, 81% 100%, 50% 81%, 19% 100%, 26% 62%, 0 38%, 36% 33%); }
.star.on { background: linear-gradient(#ffd84a, #efa612); }
.star.on::after { display: none; }

/* editor */
.ed-panel { flex: 0 0 935px; width: 170px; border: 1px solid #bbb; border-right: 0; background: #fff; display: flex; flex-direction: column; }
.ed-vars { flex: 0 0 30px; display: flex; align-items: center; padding-left: 5px; background: #f4f4f4; border-bottom: 1px solid #ddd; white-space: nowrap; }
.minus { width: 11px; height: 11px; margin-right: 4px; border: 1px solid #bbb; background: linear-gradient(#888, #888) center / 7px 2px no-repeat, #e8e8e8; flex: none; }
.ed-vars sup { font-size: 10px; line-height: 0; margin-left: 3px; vertical-align: 3px; }
.wr-btn { display: flex; align-items: center; justify-content: center; width: 18px; height: 18px; border: 1px solid #aaa; border-radius: 3px; background: #f6f6f6; flex: none; }
.ed-vars .wr-btn { margin-left: 7px; }
.ed-tools { flex: 0 0 32px; display: flex; align-items: center; gap: 10px; padding-left: 6px; background: #f4f4f4; border-bottom: 1px solid #ccc; }
.ed-ic { width: 16px; height: 18px; flex: none; }
.ed-sep { height: 20px; margin: 0 2px 0 0; }
.code { flex: 1; overflow: hidden; font: 11px/16px "Liberation Mono", "Courier New", monospace; letter-spacing: 0; }
.code-lines { margin-top: -9px; }
.ln { display: flex; height: 16px; }
.no { flex: 0 0 41px; text-align: right; padding-right: 5px; background: #f2f2f2; border-right: 1px solid #d8d8d8; color: #222; }
.src { flex: 1; padding-left: 1px; white-space: pre; color: #333; }
.ln-cur .src { background: #e4e4e4; }
.cm { color: #aaa; font-style: italic; }
.kw { color: #2b6cb8; }
.fn { color: #3a9c9c; }
.num { color: #a030b0; }
.ed-video { flex: 1; display: flex; align-items: flex-start; gap: 5px; margin-left: -3px; padding-top: 9px; color: #2a55b5; white-space: nowrap; }
.video-ic { width: 15px; height: 13px; flex: none; }

/* chart window */
.k-logo { width: 31px; }
.k-link { width: 18px; position: relative; }
.link-check { position: absolute; left: 4px; top: 12px; width: 10px; height: 8px; }
.k-dax { width: 46px; }
.k-tf { width: 47px; gap: 3px; }
.tf { width: 19px; height: 17px; line-height: 15px; text-align: center; border: 1px solid #999; border-radius: 3px; background: linear-gradient(#eee, #d6d6d6); }
.k-day { width: 67px; }
.k-units { width: 64px; }
.k-ind { width: 86px; gap: 3px; }
.ind-ic { width: 20px; height: 20px; flex: none; }
.k-chev { width: 15px; }
.info { flex: 1; display: flex; align-items: center; padding-left: 8px; }
.info-i { width: 12px; height: 12px; border: 1px solid #bbb; background: #fff; color: #666; font: 700 10px/10px "Liberation Serif", serif; text-align: center; flex: none; }
.info-name { margin-left: 6px; white-space: nowrap; }
.dot { width: 9px; height: 9px; margin-left: 6px; border-radius: 50%; background: #4f9d14; flex: none; }
.refresh { width: 24px; background: #fff; display: flex; align-items: center; justify-content: center; flex: none; }
.refresh-ic { width: 20px; height: 20px; }
.orderbar { flex: 0 0 44px; display: flex; justify-content: flex-end; background: #fff; border-bottom: 1px solid #aaa; padding-right: 566px; }
.order-tools { width: 29px; display: flex; flex-direction: column; align-items: center; gap: 5px; padding-top: 3px; border-left: 1px solid #bbb; border-right: 1px solid #bbb; }
.kbd { width: 18px; height: 15px; }
.order-qty { width: 60px; display: flex; flex-direction: column; align-items: center; gap: 4px; padding-top: 2px; border-right: 1px solid #bbb; }
.qty-input { width: 46px; height: 22px; line-height: 20px; text-align: right; padding-right: 3px; border: 1px solid #bbb; border-radius: 3px; background: #fff; }
.order-end { width: 5px; border-right: 1px solid #ccc; }
.plot { flex: 1; position: relative; background: #fff; overflow: hidden; }
.chart { display: block; }
.axis { fill: none; stroke: #aaa; stroke-width: 1; }
.wick { fill: none; stroke: #111; stroke-width: 3; }
.red { fill: #f50000; stroke: #5a0000; stroke-width: 3; }
.blue { fill: #0000ee; stroke: #000050; stroke-width: 3; }
.navy { fill: #00007a; stroke: #000040; stroke-width: 3; }
.dred { fill: #c01010; stroke: #501010; stroke-width: 3; }
.doji { fill: none; stroke: #111; stroke-width: 5; }
.doji-thin { fill: none; stroke: #111; stroke-width: 3; }
.yl text { font: 12px "Liberation Sans", Arial, sans-serif; letter-spacing: -.55px; fill: #111; }
.yl .bold { font-weight: 700; font-size: 13px; letter-spacing: -.6px; }
.xl text { font: 12px "Liberation Sans", Arial, sans-serif; letter-spacing: -.3px; fill: #111; text-anchor: middle; }
.xl .bold { font-weight: 700; font-size: 13px; }
.last-bg { fill: #f3c91f; }
.last-tx { font: 12px "Liberation Sans", Arial, sans-serif; letter-spacing: -.7px; fill: #111; }
.source { font: 12px "Liberation Sans", Arial, sans-serif; letter-spacing: -.45px; fill: #111; }
.legend { position: absolute; left: 0; top: 0; display: flex; align-items: center; height: 18px; border-right: 1px solid #bbb; border-bottom: 1px solid #bbb; background: #f6f6f6; padding-left: 4px; }
.swatch { width: 10px; height: 12px; background: linear-gradient(90deg, #0000ee 50%, #f00000 50%); flex: none; }
.legend-name { margin-left: 3px; padding-right: 3px; border-right: 1px solid #bbb; line-height: 18px; }
.legend-list { width: 18px; display: flex; flex-direction: column; align-items: center; gap: 2px; }
.legend-list i { width: 10px; height: 2px; background: #222; }
.cbar { flex: 0 0 24px; display: flex; align-items: center; background: #ececec; border-top: 1px solid #bbb; }
.bi { width: 18px; height: 18px; flex: none; }
.cbar-first { width: 31px; height: 100%; display: flex; align-items: center; justify-content: center; border-right: 1px solid #bbb; }
.cbar-left { display: flex; gap: 8px; padding-left: 3px; }
.rew { margin-left: 4px; width: 14px; text-align: center; font-size: 16px; color: #777; line-height: 16px; }
.scroll { flex: 1; height: 17px; display: flex; margin: 0 9px 0 4px; border: 1px solid #c0c0c0; border-radius: 2px; background: #ececec; }
.sbtn { width: 16px; font: 700 14px/14px "DejaVu Sans", sans-serif; text-align: center; background: #fafafa; border-right: 1px solid #bbb; color: #222; letter-spacing: 0; flex: none; }
.sbtn:last-child { border-right: 0; border-left: 1px solid #bbb; }
.strack { flex: 1; }
.sthumb { width: 75px; border-left: 1px solid #aaa; background: linear-gradient(#fafafa, #e0e0e0); flex: none; }
.cbar-right { display: flex; gap: 8px; padding-right: 3px; }
.cursor { position: absolute; left: 428px; top: 0; width: 12px; height: 10px; }
```
